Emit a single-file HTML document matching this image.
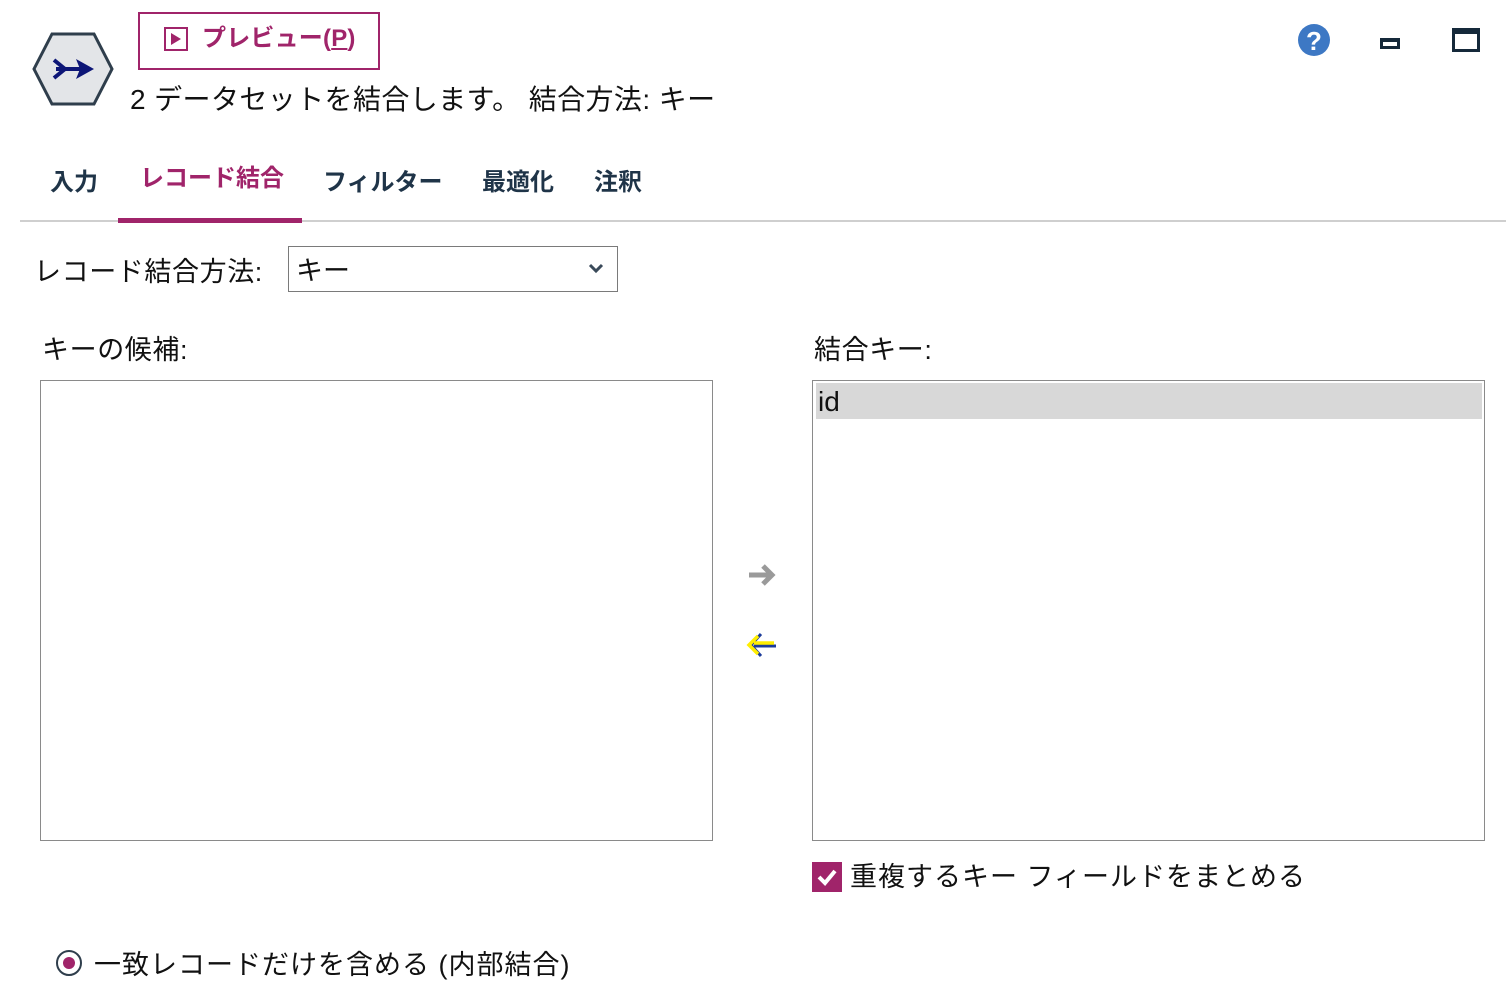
<!DOCTYPE html>
<html><head><meta charset="utf-8"><style>
body{margin:0;width:1506px;height:992px;background:#fff;position:relative;overflow:hidden;font-family:"Liberation Sans","Noto Sans CJK JP",sans-serif;color:#111}
.a{position:absolute;white-space:nowrap}
.tab{position:absolute;top:166px;font-size:24px;font-weight:bold;color:#1f3448;line-height:34px}
.box{position:absolute;border:1px solid #8a8a8a;background:#fff}
</style></head><body>
<svg class="a" style="left:32px;top:32px" width="82" height="74" viewBox="0 0 82 74">
<polygon points="20,2 62,2 80,37 62,72 20,72 2,37" fill="#e3e5e8" stroke="#2f3e4c" stroke-width="3"/>
<path d="M22,28 L33,37 L22,46" fill="none" stroke="#0d1677" stroke-width="4"/>
<path d="M24,37 H52" stroke="#0d1677" stroke-width="4"/>
<polygon points="44,27 62,37 44,47 48,37" fill="#0d1677"/>
</svg>
<div class="a" style="left:138px;top:12px;width:238px;height:54px;border:2px solid #a0246a;"></div>
<div class="a" style="left:164px;top:27px;width:24px;height:24px;border:2px solid #a0246a;box-sizing:border-box"></div>
<div class="a" style="left:171px;top:33px;width:0;height:0;border-left:10px solid #a0246a;border-top:6px solid transparent;border-bottom:6px solid transparent"></div>
<div class="a" style="left:202px;top:22px;font-size:24px;font-weight:bold;color:#a0246a;line-height:34px;letter-spacing:0.2px">プレビュー(<u>P</u>)</div>
<div class="a" style="left:130px;top:80px;font-size:28px;line-height:40px;letter-spacing:0.4px">2 データセットを結合します。 結合方法: キー</div>
<svg class="a" style="left:1297px;top:23px" width="34" height="34"><circle cx="17" cy="17" r="16" fill="#3d78c4"/><text x="17" y="27" font-size="26" font-weight="bold" fill="#fff" text-anchor="middle" font-family="Liberation Sans">?</text></svg>
<div class="a" style="left:1380px;top:38px;width:20px;height:11px;border:3px solid #15293a;border-top-width:4px;box-sizing:border-box"></div>
<div class="a" style="left:1452px;top:28px;width:28px;height:24px;border:3px solid #15293a;border-top-width:6px;box-sizing:border-box"></div>
<div class="tab" style="left:50px">入力</div>
<div class="tab" style="left:140px;top:162px;color:#a0246a">レコード結合</div>
<div class="tab" style="left:323px">フィルター</div>
<div class="tab" style="left:482px">最適化</div>
<div class="tab" style="left:594px">注釈</div>
<div class="a" style="left:20px;top:220px;width:1486px;height:2px;background:#cfcfcf"></div>
<div class="a" style="left:118px;top:218px;width:184px;height:5px;background:#a0246a"></div>
<div class="a" style="left:34px;top:253px;font-size:27px;line-height:38px;letter-spacing:0.6px">レコード結合方法:</div>
<div class="box" style="left:288px;top:246px;width:328px;height:44px;border-color:#7a7a7a"></div>
<div class="a" style="left:296px;top:252px;font-size:27px;line-height:38px">キー</div>
<svg class="a" style="left:588px;top:262px" width="16" height="12"><path d="M2,3 L8,9 L14,3" fill="none" stroke="#3a4a5a" stroke-width="3"/></svg>
<div class="a" style="left:42px;top:331px;font-size:27px;line-height:38px;letter-spacing:0.6px">キーの候補:</div>
<div class="a" style="left:814px;top:331px;font-size:27px;line-height:38px;letter-spacing:0.6px">結合キー:</div>
<div class="box" style="left:40px;top:380px;width:671px;height:459px"></div>
<div class="box" style="left:812px;top:380px;width:671px;height:459px"></div>
<div class="a" style="left:816px;top:383px;width:666px;height:36px;background:#d8d8d8"></div>
<div class="a" style="left:818px;top:383px;font-size:28px;line-height:38px">id</div>
<svg class="a" style="left:746px;top:560px" width="32" height="30"><path d="M3,15 H26 M17,6 L26,15 L17,24" fill="none" stroke="#9a9a9a" stroke-width="5"/></svg>
<svg class="a" style="left:746px;top:630px" width="32" height="30"><path d="M30,16 H8 M15,4 L5,15 L15,26" fill="none" stroke="#1c3c9a" stroke-width="3"/><path d="M28,13 H8 M12,6 L3,15 L12,24" fill="none" stroke="#ffee00" stroke-width="3.5"/></svg>
<div class="a" style="left:812px;top:862px;width:30px;height:30px;background:#a0246a"></div>
<svg class="a" style="left:812px;top:862px" width="30" height="30"><path d="M7,15 L13,21 L23,9" fill="none" stroke="#fff" stroke-width="4"/></svg>
<div class="a" style="left:850px;top:858px;font-size:27px;line-height:38px;letter-spacing:1px">重複するキー フィールドをまとめる</div>
<div class="a" style="left:56px;top:950px;width:26px;height:26px;border:2px solid #2f3e4c;border-radius:50%;box-sizing:border-box"></div>
<div class="a" style="left:63px;top:957px;width:12px;height:12px;background:#a0246a;border-radius:50%"></div>
<div class="a" style="left:94px;top:946px;font-size:27px;line-height:38px;letter-spacing:1px">一致レコードだけを含める (内部結合)</div>
</body></html>
